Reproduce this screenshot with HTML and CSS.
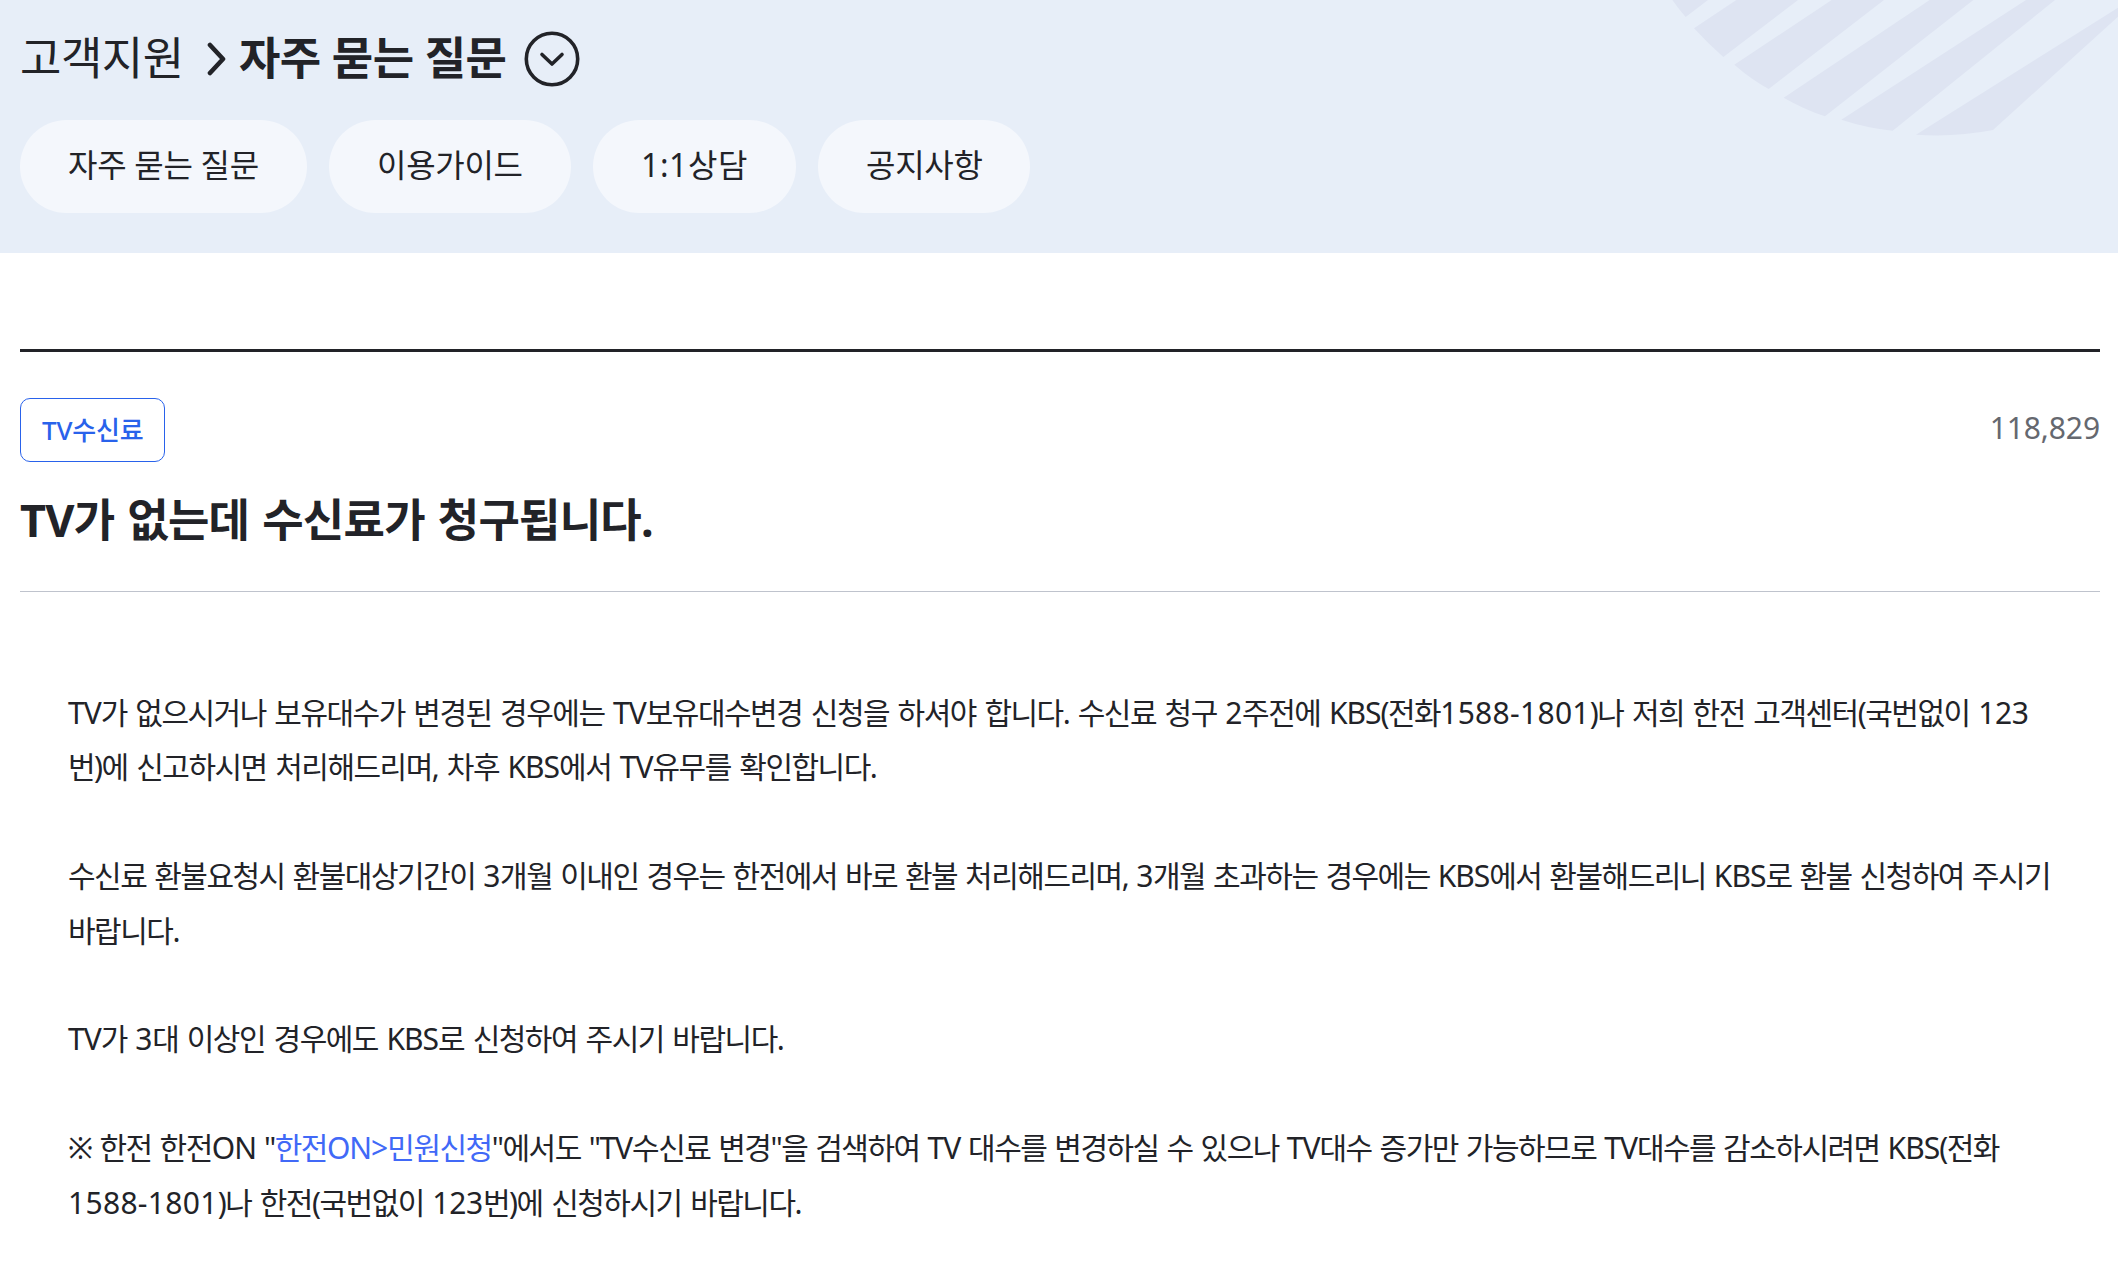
FILE: index.html
```html
<!DOCTYPE html>
<html lang="ko">
<head>
<meta charset="utf-8">
<title>자주 묻는 질문</title>
<link rel="stylesheet" href="styles.css">
</head>
<body>
<header class="hero">
  <svg class="hero-art" viewBox="0 0 1434 480" aria-hidden="true">
    <path d="M97 0H204L137 51Q116 27 97 0ZM289 0H474L250 171Q204 131 162 85ZM575 0H732L386 267Q332 237 283 194ZM869 0H1000L555 349Q490 327 431 293ZM1158 0H1245L758 392Q680 384 604 359ZM1434 23V50L1059 390Q945 412 828 404Z"/>
  </svg>
  <div class="crumbs">
    <span class="crumb">고객지원</span>
    <svg class="crumb-arrow" viewBox="0 0 20 34" aria-hidden="true"><path d="M3 3L16 17L3 31"/></svg>
    <h1 class="crumb-current">자주 묻는 질문</h1>
    <svg class="crumb-toggle" viewBox="0 0 56 56" aria-hidden="true"><circle cx="28" cy="28" r="25.7"/><path d="M18 23.5L28 33L38 23.5"/></svg>
  </div>
  <nav class="tabs">
    <a class="tab tab-faq">자주 묻는 질문</a>
    <a class="tab tab-guide">이용가이드</a>
    <a class="tab tab-counsel">1:1상담</a>
    <a class="tab tab-notice">공지사항</a>
  </nav>
</header>
<main class="article">
  <div class="article-head">
    <div class="meta"><span class="tag">TV수신료</span><span class="views">118,829</span></div>
    <h2 class="title">TV가 없는데 수신료가 청구됩니다.</h2>
  </div>
  <div class="content">
    <p class="wide"><span class="en">TV</span>가 없으시거나 보유대수가 변경된 경우에는 <span class="en">TV</span>보유대수변경 신청을 하셔야 합니다. 수신료 청구 <span class="num">2</span>주전에 <span class="en">KBS</span>(전화<span class="tel">1588-1801</span>)나 저희 한전 고객센터(국번없이 <span class="num">123</span><br>번)에 신고하시면 처리해드리며, 차후 <span class="en">KBS</span>에서 <span class="en">TV</span>유무를 확인합니다.</p>
    <p>수신료 환불요청시 환불대상기간이 <span class="num">3</span>개월 이내인 경우는 한전에서 바로 환불 처리해드리며, <span class="num">3</span>개월 초과하는 경우에는 <span class="en">KBS</span>에서 환불해드리니 <span class="en">KBS</span>로 환불 신청하여 주시기<br>바랍니다.</p>
    <p class="wide"><span class="en">TV</span>가 <span class="num">3</span>대 이상인 경우에도 <span class="en">KBS</span>로 신청하여 주시기 바랍니다.</p>
    <p>※ 한전 한전<span class="en">ON</span> "<a class="link">한전<span class="en">ON&gt;</span>민원신청</a>"에서도 "<span class="en">TV</span>수신료 변경"을 검색하여 <span class="en">TV</span> 대수를 변경하실 수 있으나 <span class="en">TV</span>대수 증가만 가능하므로 <span class="en">TV</span>대수를 감소하시려면 <span class="en">KBS</span>(전화<br><span class="wide"><span class="tel">1588-1801</span>)나 한전(국번없이 <span class="num">123</span>번)에 신청하시기 바랍니다.</span></p>
  </div>
</main>
</body>
</html>
```
FILE: styles.css
```css
* { box-sizing: border-box; }
body {
  margin: 0;
  background: #fff;
  color: #222328;
  font-family: "Noto Sans", "Noto Sans CJK KR", sans-serif;
}
h1, h2, p { margin: 0; }
.hero {
  position: relative;
  height: 253px;
  padding: 28px 20px 0;
  background: #e7eef8;
}
.hero-art {
  position: absolute;
  top: 0;
  right: 0;
  width: 478px;
  height: 160px;
  fill: #dee4f2;
}
.crumbs { display: flex; align-items: center; height: 62px; font-size: 45px; line-height: 62px; white-space: nowrap; }
.crumb { width: 187px; padding-bottom: 3px; letter-spacing: -0.5px; }
.crumb-arrow { width: 20px; height: 34px; margin-right: 12px; }
.crumb-arrow path { fill: none; stroke: #222328; stroke-width: 4.6; stroke-linecap: round; stroke-linejoin: round; }
.crumb-current { width: 285px; padding-bottom: 3px; font-size: 45px; font-weight: 700; letter-spacing: -0.55px; }
.crumb-toggle { width: 56px; height: 56px; }
.crumb-toggle circle, .crumb-toggle path { fill: none; stroke: #222328; stroke-width: 3.6; stroke-linecap: round; stroke-linejoin: round; }
.tabs { display: flex; gap: 22px; margin-top: 30px; }
.tab {
  display: flex;
  align-items: center;
  height: 93px;
  padding: 0 0 8px 48px;
  border-radius: 47px;
  background: #f4f7fc;
  font-size: 32px;
  letter-spacing: -0.3px;
  white-space: nowrap;
}
.tab-faq { width: 287px; }
.tab-guide { width: 242px; }
.tab-counsel { width: 203px; letter-spacing: 0.6px; }
.tab-notice { width: 212px; }
.article { margin: 96px 18px 0 20px; border-top: 3px solid #222328; }
.article-head { height: 240px; padding-top: 46px; border-bottom: 1px solid #bfc3cd; }
.meta { display: flex; justify-content: space-between; height: 64px; }
.tag {
  display: flex;
  align-items: center;
  width: 145px;
  height: 64px;
  padding: 0 0 2px 21px;
  border: 1px solid #2962eb;
  border-radius: 10px;
  color: #2962eb;
  font-size: 26px;
  font-weight: 500;
  letter-spacing: -0.2px;
  white-space: nowrap;
}
.views { color: #65686f; font-size: 30px; line-height: 60px; letter-spacing: -0.1px; }
.title { margin-top: 28px; font-size: 45px; line-height: 60px; font-weight: 700; letter-spacing: -0.75px; word-spacing: 2px; white-space: nowrap; }
.content { padding: 94px 0 0 48px; font-size: 30px; line-height: 54.4px; letter-spacing: -1.5px; word-spacing: 1.6px; white-space: nowrap; }
.content p + p { margin-top: 54.4px; }
.wide { word-spacing: 2.2px; }
.en { letter-spacing: -1px; }
.num { letter-spacing: -0.3px; }
.tel { letter-spacing: 0.3px; }
.link { color: #4169f7; }
```
